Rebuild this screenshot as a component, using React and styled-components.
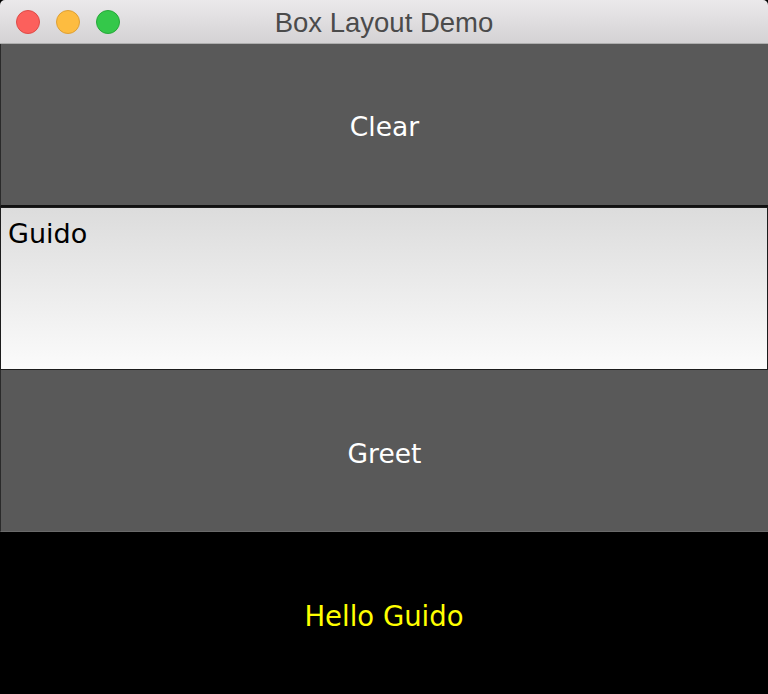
import React from 'react'
import styled, { createGlobalStyle } from 'styled-components'

const Global = createGlobalStyle`
  html, body {
    margin: 0;
    padding: 0;
    background: #000;
  }
  #root {
    width: 768px;
    height: 694px;
  }
`

const Window = styled.div`
  display: flex;
  flex-direction: column;
  width: 768px;
  height: 694px;
  overflow: hidden;
  font-family: 'DejaVu Sans', 'Liberation Sans', sans-serif;
`

const TitleBar = styled.div`
  position: relative;
  display: flex;
  align-items: center;
  justify-content: center;
  box-sizing: border-box;
  height: 44px;
  flex: none;
  background: linear-gradient(#ebe9eb, #d4d2d4);
  border-bottom: 1px solid #aeaeae;
  border-radius: 5px 5px 0 0;
`

const Lights = styled.div`
  position: absolute;
  left: 16px;
  top: 10px;
  display: flex;
  gap: 16px;
`

const Light = styled.span`
  width: 24px;
  height: 24px;
  border-radius: 50%;
  box-sizing: border-box;
  background: ${p => p.color};
  border: 1px solid ${p => p.edge};
`

const Title = styled.div`
  font-family: 'Liberation Sans', Arial, sans-serif;
  font-size: 27.5px;
  color: #4b4b4b;
  margin-top: 2px;
`

const Button = styled.div`
  flex: none;
  box-sizing: border-box;
  height: ${p => p.h}px;
  display: flex;
  align-items: center;
  justify-content: center;
  background: #595959;
  color: #fff;
  font-size: 26.5px;
  padding-top: ${p => (p.dark ? 4 : 6)}px;
  border-left: 1px solid #2a2a2a;
  border-bottom: ${p => (p.dark ? '2px solid #111' : '1px solid #6a6a6a')};
`

const Field = styled.div`
  flex: none;
  height: 163px;
  box-sizing: border-box;
  background: linear-gradient(#dcdcdc, #fbfbfb);
  border: 1px solid #1c1c1c;
  color: #000;
  font-size: 27px;
  line-height: 1;
  padding: 12px 7px 0;
`

const Output = styled.div`
  flex: 1;
  display: flex;
  align-items: center;
  justify-content: center;
  background: #000;
  color: #ffff00;
  font-size: 27.5px;
  padding-top: 6px;
`

export default function App() {
  return (
    <Window>
      <Global />
      <TitleBar>
        <Lights>
          <Light color="#fc605c" edge="#de4b47" />
          <Light color="#fdbc40" edge="#dea035" />
          <Light color="#34c84a" edge="#27a83a" />
        </Lights>
        <Title>Box Layout Demo</Title>
      </TitleBar>
      <Button dark h={163}>Clear</Button>
      <Field>Guido</Field>
      <Button h={162}>Greet</Button>
      <Output>Hello Guido</Output>
    </Window>
  )
}
